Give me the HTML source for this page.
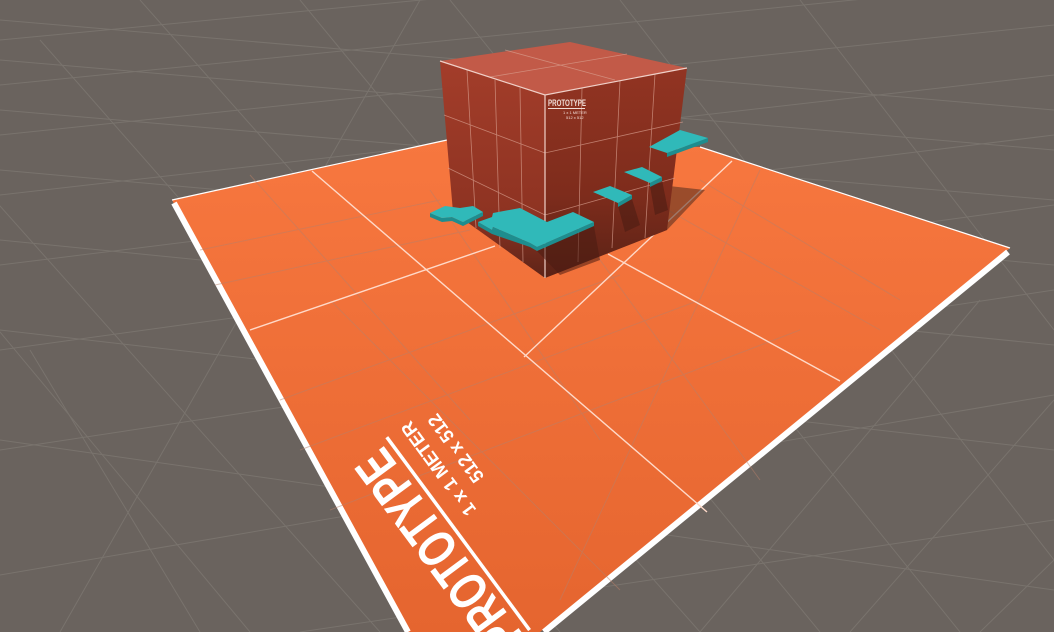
<!DOCTYPE html>
<html><head><meta charset="utf-8"><style>
html,body{margin:0;padding:0;background:#6a635e;overflow:hidden;width:1054px;height:632px}
svg{display:block;overflow:hidden}
</style></head><body>
<svg width="1054" height="632" viewBox="0 0 1054 632" xmlns="http://www.w3.org/2000/svg">
<defs>
<linearGradient id="pl" x1="0" y1="0" x2="0" y2="1">
<stop offset="0" stop-color="#f7773f"/><stop offset="1" stop-color="#e5652f"/>
</linearGradient>
<linearGradient id="rf" x1="0" y1="0" x2="0" y2="1">
<stop offset="0" stop-color="#923422"/><stop offset="0.6" stop-color="#7e2c1c"/><stop offset="1" stop-color="#5a2216"/>
</linearGradient>
<linearGradient id="lf" x1="0" y1="0" x2="0" y2="1">
<stop offset="0" stop-color="#a33d2a"/><stop offset="0.7" stop-color="#8e3322"/><stop offset="1" stop-color="#5e2418"/>
</linearGradient>
<clipPath id="cp"><rect width="1054" height="632"/></clipPath>
</defs>
<g clip-path="url(#cp)">
<rect width="1054" height="632" fill="#6a635e"/>
<g stroke="#79736d" stroke-width="1" fill="none">
<path d="M0 40 L1054 -60 M0 85 L1054 -20 M0 135 L1054 25 M0 195 L1054 75 M0 265 L1054 135 M0 350 L1054 205 M0 450 L1054 290 M0 575 L1054 395 M300 632 L1054 520"/>
<path d="M0 20 L1054 110 M0 60 L1054 150 M0 110 L1054 200 M0 170 L1054 265 M0 240 L1054 345 M0 330 L1054 450 M0 440 L1054 590"/>
<path d="M-50 150 L380 632 M-60 260 L250 632 M40 40 L560 632 M140 0 L700 632 M300 0 L820 632 M450 0 L960 632 M620 0 L1054 560 M800 0 L1054 330"/>
<path d="M60 632 L420 0 M700 632 L980 300 M850 632 L1054 400 M980 632 L1054 560 M200 632 L30 350"/>
</g>
<polygon points="172,200 447,140 700,147 1010,248 540,632 406,632" fill="url(#pl)"/>
<polyline points="172,200 447,140" stroke="#fff" stroke-width="1.2" fill="none"/>
<polyline points="700,147 1010,248" stroke="#fff" stroke-width="1.2" fill="none"/>
<polyline points="174,203 408,632" stroke="#fff" stroke-width="6" fill="none"/>
<polyline points="1008,252 544,632" stroke="#fff" stroke-width="6" fill="none"/>
<g stroke="#b8806a" stroke-width="1" fill="none" opacity="0.5">
<path d="M200 250 L440 200 M215 285 L470 230 M280 400 L620 275 M300 450 L700 300 M330 510 L800 330 M560 205 L760 480 M430 190 L600 440 M250 175 L470 420 M330 300 L620 590 M700 180 L900 300 M650 200 L880 330 M760 170 L560 600"/>
</g>
<g stroke="#ffd9c8" stroke-width="1.4" fill="none">
<path d="M250 330 L495 246 M312 171 L707 512 M608 254 L840 381 M524 357 L732 161"/>
</g>
<polygon points="545,278 667,230 705,190 660,185 610,250" fill="#4e2a1e" opacity="0.55"/>
<polygon points="440,61 570,42 687,68 545,95" fill="#c25a48"/>
<polygon points="440,61 545,95 545,278 453,212" fill="url(#lf)"/>
<polygon points="545,95 687,68 667,230 545,278" fill="url(#rf)"/>
<g stroke="#d9a090" stroke-width="0.8" fill="none" opacity="0.7">
<path d="M505 50 L615 80 M490 77 L627 54"/>
<path d="M467 70 L476 228 M495 80 L500 248 M520 88 L523 262"/>
<path d="M582 88 L578 262 M620 81 L612 248 M655 74 L645 238"/>
<path d="M444 115 L545 153 L683 122 M448 168 L545 215 L675 178"/>
</g>
<polyline points="440,61 545,95 687,68" stroke="#f0d0c8" stroke-width="1.2" fill="none"/>
<line x1="545" y1="95" x2="545" y2="278" stroke="#f0d0c8" stroke-width="1.2"/>
<text x="548" y="106" font-family="Liberation Sans, sans-serif" font-size="9" font-weight="bold" fill="#f0dcd6" textLength="38" lengthAdjust="spacingAndGlyphs">PROTOTYPE</text>
<rect x="548" y="108" width="37" height="1" fill="#f0dcd6"/>
<text x="563" y="114" font-family="Liberation Sans, sans-serif" font-size="4" fill="#f0dcd6">1 x 1 METER</text>
<text x="566" y="119" font-family="Liberation Sans, sans-serif" font-size="4" fill="#f0dcd6">512 x 512</text>
<g fill="#4a1c12" opacity="0.55">
<polygon points="537,251 594,226 600,260 560,275"/>
<polygon points="618,206 632,199 640,225 625,232"/>
<polygon points="650,186 662,180 668,210 655,215"/>
</g>
<g fill="#1e8d8e">
<polygon points="430,213 442,218 452,217 463,222 483,212 483,216 463,226 452,221 442,222 430,217"/>
<polygon points="478,222 492,230 493,227 530,243 537,247 594,222 594,226 537,251 530,247 492,234 478,226"/>
<polygon points="618,203 632,195 632,199 618,207"/>
<polygon points="650,183 662,177 662,181 650,187"/>
<polygon points="667,153 708,138 708,142 667,157"/>
</g>
<g fill="#30b9b9">
<polygon points="430,213 445,206 460,208 473,206 483,212 463,222 452,217 442,218"/>
<polygon points="478,222 492,217 493,213 520,208 547,222 573,212 594,222 537,247 530,243 493,227 492,230"/>
<polygon points="593,192 610,186 632,195 618,203"/>
<polygon points="624,172 642,167 662,177 650,183"/>
<polygon points="649,147 680,130 708,138 667,153"/>
</g>
<g transform="translate(387,437) rotate(-126.5)" fill="#fff" font-family="Liberation Sans, sans-serif" font-weight="bold">
<text x="-240" y="-8" font-size="54" textLength="236" lengthAdjust="spacingAndGlyphs">PROTOTYPE</text>
<rect x="-240" y="-2" width="240" height="3.5"/>
<text x="-112" y="29" font-size="19" textLength="112" lengthAdjust="spacingAndGlyphs">1 x 1 METER</text>
<text x="-90" y="55" font-size="19" textLength="80" lengthAdjust="spacingAndGlyphs">512 x 512</text>
</g>
</g>
</svg>
</body></html>
